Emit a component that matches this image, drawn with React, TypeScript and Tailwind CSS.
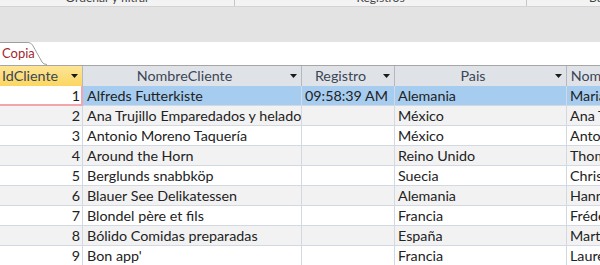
import React from "react";

const rows: [string, string, string, string, string][] = [
  ["1", "Alfreds Futterkiste", "09:58:39 AM", "Alemania", "Maria Anders"],
  ["2", "Ana Trujillo Emparedados y helados", "", "México", "Ana Trujillo"],
  ["3", "Antonio Moreno Taquería", "", "México", "Antonio Moreno"],
  ["4", "Around the Horn", "", "Reino Unido", "Thomas Hardy"],
  ["5", "Berglunds snabbköp", "", "Suecia", "Christina Berglund"],
  ["6", "Blauer See Delikatessen", "", "Alemania", "Hanna Moos"],
  ["7", "Blondel père et fils", "", "Francia", "Frédérique Citeaux"],
  ["8", "Bólido Comidas preparadas", "", "España", "Martín Sommer"],
  ["9", "Bon app'", "", "Francia", "Laurence Lebihan"],
];

function Tri() {
  return (
    <svg width="7" height="4" viewBox="0 0 7 4" className="block">
      <path d="M0 0 H7 L3.5 4 Z" fill="#1a1a1a" />
    </svg>
  );
}

function Head({ label, active, left }: { label: string; active?: boolean; left?: boolean }) {
  return (
    <div
      className={
        "flex h-[20px] items-center border-r border-[#b4b8bf] overflow-hidden whitespace-nowrap " +
        (active ? "bg-gradient-to-b from-[#fee595] to-[#fbd660]" : "bg-[#dfe3e8]")
      }
    >
      <div className={"flex-1 min-w-0 overflow-hidden text-[#3b4656] " + (left ? "text-left pl-[11px]" : "text-center")}>{label}</div>
      <div className="w-[15px] flex justify-center shrink-0 pr-[1px]">
        <Tri />
      </div>
    </div>
  );
}

export default function App() {
  const font = { fontFamily: "Lato, 'Liberation Sans', sans-serif" };
  return (
    <div className="w-[600px] h-[265px] overflow-hidden bg-white text-[14.3px]" style={font}>
      {/* ribbon bottom */}
      <div className="flex h-[6px] bg-[#f3f3f3] border-b border-[#d4d4d4] box-content overflow-hidden text-[12px] text-[#444]">
        <div className="w-[235px] shrink-0 pr-[19px] flex justify-center items-end border-r border-[#c6c6c6]">
          <span className="leading-[14px] mb-[1px] whitespace-nowrap">Ordenar y filtrar</span>
        </div>
        <div className="w-[292px] shrink-0 flex justify-center items-end border-r border-[#c6c6c6]">
          <span className="leading-[14px] mb-[1px] whitespace-nowrap">Registros</span>
        </div>
        <div className="flex-1 min-w-0 pl-[62px] flex items-end">
          <span className="leading-[14px] mb-[1px] whitespace-nowrap">Buscar</span>
        </div>
      </div>
      <div className="h-[35px] bg-[#e3e3e3]" />
      {/* tab strip */}
      <div className="h-[23px] bg-white flex items-end">
        <div className="relative w-[48px] h-[23px]">
          <svg width="48" height="23" viewBox="0 0 48 23" className="absolute inset-0">
            <path d="M0 0.5 H28 Q31 0.5 32.5 3 L42 20 Q43.5 22.5 47 22.5" fill="#ffffff" stroke="#9e9e9e" strokeWidth="1" />
          </svg>
          <span className="relative block pl-[2px] pt-[4px] leading-[15px] text-[13px] text-[#a3262c]">Copia</span>
        </div>
        <div className="flex-1 h-[23px]" />
      </div>
      {/* grid */}
      <div className="border-t border-[#a6a6a6] ml-[-9px] grid grid-cols-[92px_219px_93px_172px_132px] text-[#222]">
        <Head label="IdCliente" active left />
        <Head label="NombreCliente" />
        <Head label="Registro" />
        <Head label="Pais" />
        <Head label="NombreContacto" />
        {rows.map((r, i) => {
          const sel = i === 0;
          const bg = sel ? "bg-[#a6cdf0]" : i % 2 === 1 ? "bg-[#f2f2f2]" : "bg-white";
          return (
            <React.Fragment key={r[0]}>
              <div
                className={
                  "h-[20px] leading-[19px] text-right whitespace-nowrap overflow-hidden " +
                  (sel
                    ? "bg-white border-r-2 border-b-2 border-[#f2a5ad] pr-[1px]"
                    : bg + " border-r border-b border-[#d3d9e3] pr-[2px]")
                }
              >
                {r[0]}
              </div>
              {r.slice(1).map((c, j) => (
                <div
                  key={j}
                  className={
                    bg +
                    " h-[20px] leading-[19px] border-r border-b border-[#d3d9e3] whitespace-nowrap overflow-hidden " +
                    (j === 0 ? "pl-[4px]" : "pl-[3px]")
                  }
                >
                  {c}
                </div>
              ))}
            </React.Fragment>
          );
        })}
      </div>
    </div>
  );
}
